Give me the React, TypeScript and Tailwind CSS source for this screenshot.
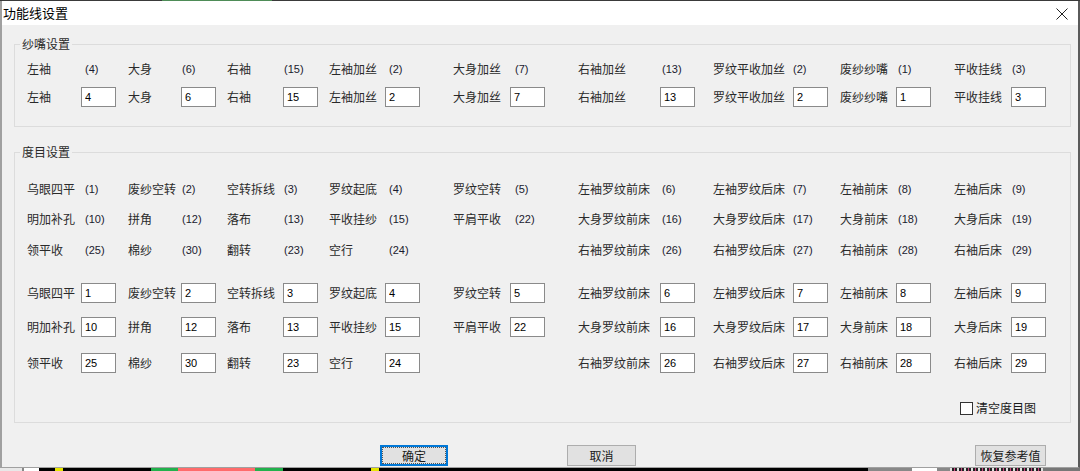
import React from 'react';

type Cell = { label: string; num: string; val: string } | null;

const cjk = "font-['Noto_Sans_CJK_SC',sans-serif]";
const lat = "font-['Liberation_Sans',Arial,sans-serif]";

// label width = distance from column start to the edit box
const labelW = ['w-[54px]', 'w-[53px]', 'w-[56px]', 'w-[56px]', 'w-[57px]', 'w-[82px]', 'w-[80px]', 'w-[56px]', 'w-[57px]'];
const numPad = ['pl-[4px]', 'pl-[1px]', 'pl-[1px]', 'pl-[4px]', 'pl-[5px]', 'pl-[2px]', 'pl-0', 'pl-[2px]', 'pl-[1px]'];

const cols = 'grid grid-cols-[101px_99px_102px_124px_125px_135px_127px_114px_1fr] pl-[12px]';

const yarnRow: Cell[] = [
  { label: '左袖', num: '(4)', val: '4' },
  { label: '大身', num: '(6)', val: '6' },
  { label: '右袖', num: '(15)', val: '15' },
  { label: '左袖加丝', num: '(2)', val: '2' },
  { label: '大身加丝', num: '(7)', val: '7' },
  { label: '右袖加丝', num: '(13)', val: '13' },
  { label: '罗纹平收加丝', num: '(2)', val: '2' },
  { label: '废纱纱嘴', num: '(1)', val: '1' },
  { label: '平收挂线', num: '(3)', val: '3' },
];

const stitchRows: Cell[][] = [
  [
    { label: '乌眼四平', num: '(1)', val: '1' },
    { label: '废纱空转', num: '(2)', val: '2' },
    { label: '空转拆线', num: '(3)', val: '3' },
    { label: '罗纹起底', num: '(4)', val: '4' },
    { label: '罗纹空转', num: '(5)', val: '5' },
    { label: '左袖罗纹前床', num: '(6)', val: '6' },
    { label: '左袖罗纹后床', num: '(7)', val: '7' },
    { label: '左袖前床', num: '(8)', val: '8' },
    { label: '左袖后床', num: '(9)', val: '9' },
  ],
  [
    { label: '明加补孔', num: '(10)', val: '10' },
    { label: '拼角', num: '(12)', val: '12' },
    { label: '落布', num: '(13)', val: '13' },
    { label: '平收挂纱', num: '(15)', val: '15' },
    { label: '平肩平收', num: '(22)', val: '22' },
    { label: '大身罗纹前床', num: '(16)', val: '16' },
    { label: '大身罗纹后床', num: '(17)', val: '17' },
    { label: '大身前床', num: '(18)', val: '18' },
    { label: '大身后床', num: '(19)', val: '19' },
  ],
  [
    { label: '领平收', num: '(25)', val: '25' },
    { label: '棉纱', num: '(30)', val: '30' },
    { label: '翻转', num: '(23)', val: '23' },
    { label: '空行', num: '(24)', val: '24' },
    null,
    { label: '右袖罗纹前床', num: '(26)', val: '26' },
    { label: '右袖罗纹后床', num: '(27)', val: '27' },
    { label: '右袖前床', num: '(28)', val: '28' },
    { label: '右袖后床', num: '(29)', val: '29' },
  ],
];

function NumRow({ cells }: { cells: Cell[] }) {
  return (
    <div className={`${cols} h-[20px]`}>
      {cells.map((c, i) => (
        <div key={i} className="flex items-center h-[20px]">
          {c && (
            <>
              <span className={`${labelW[i]} shrink-0 ${cjk} text-[12px] leading-[20px] text-[#2a2a2a] whitespace-nowrap`}>
                {c.label}
              </span>
              <span className={`${numPad[i]} ${lat} text-[11px] leading-[20px] text-[#1a1a2e]`}>{c.num}</span>
            </>
          )}
        </div>
      ))}
    </div>
  );
}

function EditRow({ cells }: { cells: Cell[] }) {
  return (
    <div className={`${cols} h-[20px]`}>
      {cells.map((c, i) => (
        <div key={i} className="flex items-center h-[20px]">
          {c && (
            <>
              <span className={`${labelW[i]} shrink-0 ${cjk} text-[12px] leading-[20px] text-[#2a2a2a] whitespace-nowrap`}>
                {c.label}
              </span>
              <input
                readOnly
                defaultValue={c.val}
                className={`w-[35px] h-[20px] border border-[#8a8a8a] bg-white px-[3px] ${lat} text-[11px] text-black outline-none`}
              />
            </>
          )}
        </div>
      ))}
    </div>
  );
}

function Button({ label, focused }: { label: string; focused?: boolean }) {
  return (
    <div
      className={`h-[21px] flex items-center justify-center bg-[#e1e1e1] ${cjk} text-[12px] text-[#1a1a1a] ${
        focused ? 'border-2 border-[#0078d7]' : 'border border-[#adadad]'
      }`}
    >
      {focused ? (
        <div className="w-full h-full border border-dotted border-[#555] flex items-center justify-center">{label}</div>
      ) : (
        label
      )}
    </div>
  );
}

export default function App() {
  return (
    <div className="w-[1080px] h-[471px] flex flex-col bg-black overflow-hidden">
      <div className="h-[1px] flex shrink-0">
        <div className="w-[162px] bg-[#3a3a3a]" />
        <div className="w-[110px] bg-[#4e8c57]" />
        <div className="flex-1 bg-[#3a3a3a]" />
      </div>

      <div className="h-[467px] shrink-0 flex flex-col bg-[#f0f0f0] border-l-2 border-r-2 border-b border-l-[#a0a0a0] border-r-[#5a5a5a] border-b-[#a0a0a0]">
        {/* title bar */}
        <div className="h-[24px] shrink-0 bg-white flex items-center justify-between pl-[1px] pr-[10px]">
          <span className={`${cjk} text-[13px] text-black`}>功能线设置</span>
          <svg width="12" height="12" viewBox="0 0 12 12" className="mt-[1px]">
            <path d="M0.5 0.5 L11.5 11.5 M11.5 0.5 L0.5 11.5" stroke="#222" strokeWidth="1" />
          </svg>
        </div>

        <div className="flex-1 flex flex-col pl-[12px] pr-[7px]">
          <fieldset className="mt-[11px] border border-[#dcdcdc] pt-[7px] pb-[19px] flex flex-col gap-[8px]">
            <legend className={`ml-[5px] px-[2px] ${cjk} text-[12px] leading-[16px] text-[#2a2a2a]`}>纱嘴设置</legend>
            <NumRow cells={yarnRow} />
            <EditRow cells={yarnRow} />
          </fieldset>

          <fieldset className="mt-[17px] border border-[#dcdcdc] pt-[19px] pb-[6px] flex flex-col">
            <legend className={`ml-[5px] px-[2px] ${cjk} text-[12px] leading-[16px] text-[#2a2a2a]`}>度目设置</legend>
            <NumRow cells={stitchRows[0]} />
            <div className="mt-[10px]">
              <NumRow cells={stitchRows[1]} />
            </div>
            <div className="mt-[11px]">
              <NumRow cells={stitchRows[2]} />
            </div>
            <div className="mt-[23px]">
              <EditRow cells={stitchRows[0]} />
            </div>
            <div className="mt-[14px]">
              <EditRow cells={stitchRows[1]} />
            </div>
            <div className="mt-[16px]">
              <EditRow cells={stitchRows[2]} />
            </div>
            <div className="mt-[27px] h-[16px] flex items-center justify-end pr-[34px]">
              <div className="w-[13px] h-[13px] border border-[#333] bg-white" />
              <span className={`ml-[3px] ${cjk} text-[12px] text-[#1a1a1a]`}>清空度目图</span>
            </div>
          </fieldset>

          <div className="mt-[22px] flex pl-[366px]">
            <div className="w-[68px]">
              <Button label="确定" focused />
            </div>
            <div className="w-[69px] ml-[119px]">
              <Button label="取消" />
            </div>
            <div className="w-[71px] ml-[339px]">
              <Button label="恢复参考值" />
            </div>
          </div>
        </div>
      </div>

      <div className="h-[3px] flex shrink-0">
        <div className="w-[22px] bg-[#e8e8e8]" />
        <div className="w-[2px] bg-[#888]" />
        <div className="w-[15px] bg-white" />
        <div className="w-[16px] bg-black" />
        <div className="w-[8px] bg-[#e6e600]" />
        <div className="w-[88px] bg-black" />
        <div className="w-[27px] bg-[#22b14c]" />
        <div className="w-[77px] bg-[#ff6b6b]" />
        <div className="w-[28px] bg-[#22b14c]" />
        <div className="w-[88px] bg-black" />
        <div className="w-[8px] bg-[#e6e600]" />
        <div className="w-[489px] bg-black" />
        <div className="w-[44px] bg-[#888]" />
        <div className="w-[25px] bg-white" />
        <div className="w-[13px] bg-[#888]" />
        <div className="w-[93px] bg-[repeating-linear-gradient(90deg,#e0e0e0_0_2px,#222_2px_4px,#d04080_4px_5px,#222_5px_7px)]" />
        <div className="flex-1 bg-[#777]" />
      </div>
    </div>
  );
}
